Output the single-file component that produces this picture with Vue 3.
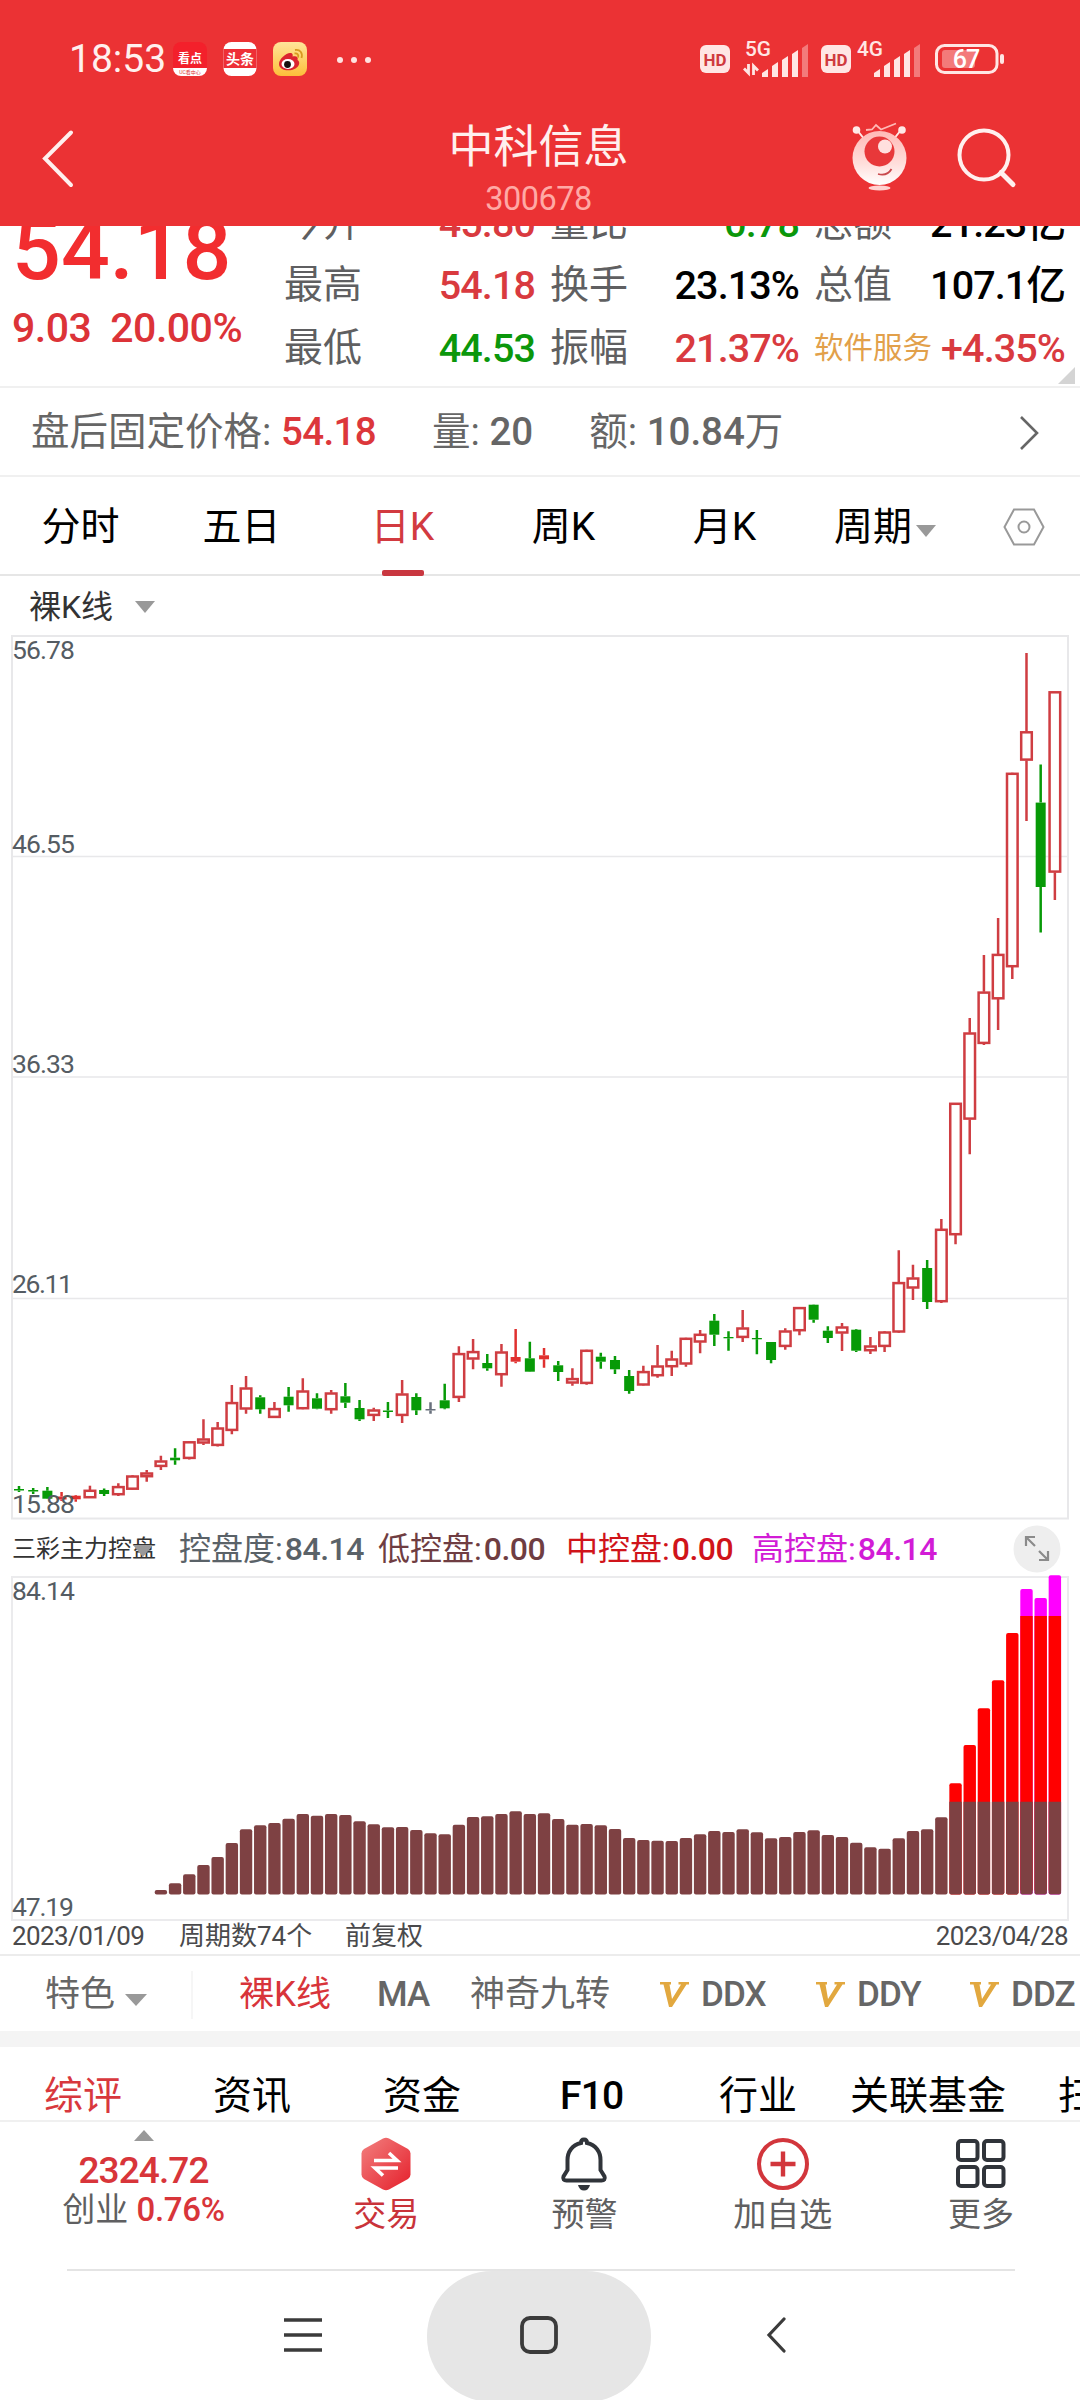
<script setup>
import { ref } from 'vue'

const periods = ['分时', '五日', '日K', '周K', '月K', '周期']
const activePeriod = ref('日K')

const quotes = [
  { label: '今开', value: '45.80', tone: 'up' },
  { label: '量比', value: '0.78', tone: 'down' },
  { label: '总额', value: '21.23亿', tone: 'flat' },
  { label: '最高', value: '54.18', tone: 'up' },
  { label: '换手', value: '23.13%', tone: 'flat' },
  { label: '总值', value: '107.1亿', tone: 'flat' },
  { label: '最低', value: '44.53', tone: 'down' },
  { label: '振幅', value: '21.37%', tone: 'up' },
  { label: '软件服务', value: '+4.35%', tone: 'up', sector: true },
]

const sections = ['综评', '资讯', '资金', 'F10', '行业', '关联基金', '扫雷']
const activeSection = ref('综评')

// r = alta (vazado), s = alta com corpo cheio, g = baixa, n = neutro
// [tipo, máxima, topo do corpo, base do corpo, mínima]
const candles = [
  ['g', 1486, 1489, 1490.5, 1492], ['g', 1488, 1490, 1491.5, 1494], ['g', 1487, 1490.7, 1498.7, 1499],
  ['s', 1492, 1496.5, 1499.5, 1501], ['s', 1495, 1495.7, 1499.3, 1501.7], ['r', 1485.7, 1490, 1498, 1498],
  ['g', 1488.5, 1490, 1494, 1496], ['r', 1483.3, 1486.3, 1495, 1496], ['r', 1475, 1475.7, 1489.5, 1490],
  ['r', 1470, 1472.7, 1477, 1481.7], ['r', 1455.7, 1460.7, 1466.7, 1470], ['g', 1448.3, 1457.7, 1460.3, 1464.7],
  ['r', 1441, 1441.5, 1458.7, 1459.5], ['r', 1419.3, 1438.7, 1443.3, 1445], ['r', 1422, 1427.7, 1445.7, 1446.5],
  ['r', 1385, 1402.3, 1430.7, 1434.3], ['r', 1376, 1387.7, 1409.3, 1413.7], ['g', 1395.3, 1397.3, 1409.3, 1413.7],
  ['r', 1402, 1408.3, 1417.7, 1418], ['g', 1387, 1396.7, 1405.3, 1411.7], ['r', 1378.3, 1390.7, 1409, 1409.3],
  ['g', 1393.3, 1398.3, 1408.7, 1409.3], ['r', 1390, 1392.7, 1410, 1413.7], ['g', 1383, 1396.3, 1402.7, 1408],
  ['g', 1400, 1408, 1419.3, 1421], ['r', 1407.7, 1409.7, 1415.7, 1421], ['g', 1402, 1410.5, 1412, 1418],
  ['r', 1380, 1393.7, 1415.7, 1423], ['g', 1393.3, 1397, 1410.3, 1415], ['n', 1402.3, 1409, 1410.5, 1413.7],
  ['g', 1383.7, 1400.3, 1408.3, 1409.3], ['r', 1346.3, 1353.3, 1397.7, 1402], ['r', 1339, 1351.3, 1359.3, 1369.3],
  ['g', 1354, 1363, 1368.3, 1370.7], ['r', 1344, 1351.7, 1375, 1386.7], ['s', 1329, 1357, 1361.7, 1363.3],
  ['g', 1341.7, 1358.3, 1371.7, 1372], ['s', 1348, 1355.3, 1359.3, 1367.7], ['g', 1361, 1365.3, 1372, 1381],
  ['r', 1368.3, 1378.3, 1383.3, 1385.7], ['r', 1349.7, 1350, 1383.7, 1384.7], ['g', 1352.7, 1356.7, 1361.7, 1368.7],
  ['g', 1356, 1360, 1369.3, 1374], ['g', 1370, 1376, 1391, 1393.7], ['r', 1365.7, 1371.3, 1385.3, 1385.7],
  ['r', 1345, 1365.7, 1376, 1377.7], ['r', 1350.7, 1358.7, 1367, 1376], ['r', 1337.7, 1338, 1364.3, 1366.7],
  ['r', 1330, 1334, 1342.3, 1353.3], ['g', 1314, 1320.7, 1334.7, 1346], ['g', 1331.3, 1337, 1338.3, 1350.7],
  ['r', 1310, 1327.7, 1337.7, 1342], ['g', 1330, 1338, 1339.3, 1354.3], ['g', 1342, 1342, 1360, 1363.3],
  ['r', 1328.3, 1330.7, 1346.7, 1349.7], ['r', 1307, 1307.3, 1331, 1335.3], ['g', 1304.5, 1304.7, 1319.7, 1322.7],
  ['g', 1326.3, 1330.7, 1338, 1343], ['r', 1323, 1326.7, 1333.3, 1351], ['g', 1329, 1329.7, 1350.7, 1352],
  ['r', 1337, 1345.7, 1351, 1354], ['r', 1331, 1331.7, 1346.7, 1352], ['r', 1250.3, 1282.3, 1332.3, 1333],
  ['r', 1264.7, 1277.7, 1288.3, 1300], ['g', 1260, 1268, 1302, 1309], ['r', 1219, 1229, 1302, 1303],
  ['r', 1102.9, 1103, 1235, 1244.3], ['r', 1018, 1032.7, 1119.4, 1154.3], ['r', 955, 991.8, 1043.7, 1045],
  ['r', 917.9, 954.1, 999.1, 1030], ['r', 772.8, 773, 967, 979], ['r', 653, 731.5, 760.4, 821],
  ['g', 764.5, 802.6, 887, 932.6], ['r', 691.5, 691.5, 872.4, 900],
].map(([type, high, top, bottom, low], i) => ({ type, high, top, bottom, low, x: 19 + i * 14.19 }))

const colors = { r: '#cf3d42', s: '#e0302f', g: '#079a07', n: '#68707c' }

const BASE = 1894.5
const LOW_TOP = 1801.7
const MID_TOP = 1616
const bars = [
  1890, 1883.3, 1874.3, 1865, 1857, 1843, 1829.3, 1825.3, 1823, 1818.7, 1814, 1815.7, 1814, 1815, 1821.3,
  1824.3, 1827.3, 1827, 1830, 1833.3, 1834.3, 1824.7, 1817, 1816.3, 1814, 1811.3, 1814, 1813.3, 1819,
  1824.7, 1824, 1825.3, 1829, 1838, 1840, 1840.7, 1841, 1838, 1834.3, 1831, 1832, 1829.3, 1832.3, 1838.3,
  1837, 1832, 1830.3, 1835, 1837, 1842.7, 1847.3, 1848.7, 1838.3, 1831, 1829.3, 1817.3, 1783.3, 1745,
  1708.3, 1680.3, 1633, 1589, 1598, 1575.3,
].map((top, i) => ({ top, x: 19 + (i + 10) * 14.19 - 6.2 }))

function barColor(top) {
  if (top < MID_TOP) return '#ff00ff'
  return top < LOW_TOP ? '#ff0000' : '#7e4143'
}
</script>

<template>
  <div class="phone">
    <header class="header">
      <div class="status">
        <span class="clock">18:53</span>
        <svg class="status-apps" width="210" height="40" viewBox="170 39 210 40">
          <defs>
            <linearGradient id="weibo" x1="0" y1="0" x2="0" y2="1">
              <stop offset="0" stop-color="#ffe59a" />
              <stop offset="1" stop-color="#fdbf3a" />
            </linearGradient>
          </defs>
          <rect x="173" y="42" width="34" height="34" rx="8" fill="#f3202b" />
          <path d="M173 68h34a8 8 0 0 1-8 8h-18a8 8 0 0 1-8-8z" fill="#fff" />
          <text x="190" y="62.5" font-size="12" text-anchor="middle" fill="#fff" font-weight="700">看点</text>
          <text x="190" y="73.5" font-size="5" text-anchor="middle" fill="#d33">UC看中心</text>
          <rect x="223.500" y="42" width="33" height="34" rx="8" fill="#fff" />
          <path d="M223.500 49h33v19h-33z" fill="#ee2f36" />
          <text x="240" y="64" font-size="14" text-anchor="middle" fill="#fff" font-weight="700">头条</text>
          <rect x="273" y="42" width="34" height="34" rx="8" fill="url(#weibo)" />
          <path d="M279 64c0-5 7-11 11-11 3 0 3 2 2.500 3.500 4-1 6 .5 5 3.500 3 2 2 6-2 8.500-6 3.500-16.500 2-16.500-4.500z" fill="#dc2430" />
          <ellipse cx="288" cy="64" rx="6.500" ry="5" fill="#fff" />
          <circle cx="287.500" cy="64.500" r="3.400" fill="#16110f" />
          <path d="M295 50c5-1 8 3 6.500 8M294.500 53.500c3-.5 4.500 1.500 3.500 4" fill="none" stroke="#d89a20" stroke-width="1.800" />
          <circle cx="340" cy="60" r="3" fill="#ffe3e0" />
          <circle cx="354" cy="60" r="3" fill="#ffe3e0" />
          <circle cx="368" cy="60" r="3" fill="#ffe3e0" />
        </svg>
        <svg class="status-signal" width="310" height="46" viewBox="696 36 310 46" fill="#ffe6e4">
          <g v-for="x in [700, 821]" :key="x">
            <rect :x="x" y="45" width="30" height="28" rx="6" />
            <text
              :x="x + 3.5"
              y="65.500"
              font-size="17"
              font-weight="700"
              fill="#cf3a3e"
              textLength="23"
              lengthAdjust="spacingAndGlyphs"
            >HD</text>
          </g>
          <text x="745" y="55.500" font-size="20" font-weight="500" textLength="26" lengthAdjust="spacingAndGlyphs">5G</text>
          <text x="857" y="55.500" font-size="20" font-weight="500" textLength="26" lengthAdjust="spacingAndGlyphs">4G</text>
          <path d="M748.500 64v9l-4.500-4.500M753.500 75v-9l4.500 4.500" fill="none" stroke="#ffe6e4" stroke-width="2.800" />
          <g v-for="x in [762, 874]" :key="x">
            <path :d="`M${x} 73l6-4v8h-6z`" />
            <path :d="`M${x + 10} 66l6-4v15h-6z`" />
            <path :d="`M${x + 20} 60l6-4v21h-6z`" />
            <path :d="`M${x + 30} 54l6-4v27h-6z`" />
            <path :d="`M${x + 40} 48l6-4v33h-6z`" opacity=".4" />
          </g>
          <rect x="936.500" y="45.500" width="60.500" height="27" rx="8" fill="none" stroke="#ffe6e4" stroke-width="3" />
          <rect x="942" y="50" width="33" height="18" rx="3" opacity=".4" />
          <rect x="1000" y="54" width="4" height="10" rx="2" />
          <text x="966" y="68" font-size="25" text-anchor="middle" font-weight="500" fill="#fff" letter-spacing="-1">67</text>
        </svg>
      </div>
      <div class="nav">
        <svg width="40" height="64" viewBox="0 0 40 64">
          <path d="M32 5.500L6 31.500l26 26.500" fill="none" stroke="#fff0ee" stroke-width="4" stroke-linecap="round" />
        </svg>
        <div class="title">
          <h1>中科信息</h1>
          <span>300678</span>
        </div>
        <div class="nav-actions">
          <svg width="62" height="76" viewBox="848 123 62 76">
            <defs>
              <linearGradient id="mascot" x1="0" y1="0" x2="0" y2="1">
                <stop offset="0" stop-color="#ffb9b6" />
                <stop offset=".6" stop-color="#ffdedb" />
                <stop offset="1" stop-color="#fff" />
              </linearGradient>
            </defs>
            <path d="M857 132l8 10M901 132l-8 10" stroke="#ffe9e7" stroke-width="2" />
            <circle cx="856.500" cy="132" r="3.800" fill="#ffe9e7" />
            <circle cx="902" cy="132" r="3.800" fill="#ffe9e7" />
            <path d="M866 132l6-.5 4-4.500 5 4.500 15-6" fill="none" stroke="#ffb9b6" stroke-width="1.800" />
            <circle cx="879.500" cy="160" r="27" fill="url(#mascot)" />
            <circle cx="879.500" cy="153.500" r="15" fill="#e8383a" />
            <circle cx="885" cy="148.500" r="7" fill="#ffe0de" />
            <path d="M878 176c6 1.500 11-.5 13.500-5" fill="none" stroke="#c9484c" stroke-width="1.800" />
            <ellipse cx="879.500" cy="190" rx="11" ry="2.600" fill="#ffd2d0" />
          </svg>
          <svg width="62" height="76" viewBox="955 122 62 76" fill="none" stroke="#fff0ee" stroke-linecap="round">
            <circle cx="984" cy="156" r="24.500" stroke-width="4" />
            <path d="M1001 173.500l12 12" stroke-width="5" />
          </svg>
        </div>
      </div>
    </header>

    <section class="quote">
      <div class="price">
        <strong>54.18</strong>
        <p><span>9.03</span><span>20.00%</span></p>
      </div>
      <div class="quote-grid">
        <div v-for="q in quotes" :key="q.label" class="cell">
          <span class="label" :class="{ sector: q.sector }">{{ q.label }}</span>
          <span class="value" :class="q.tone">{{ q.value }}</span>
        </div>
      </div>
      <i class="corner"></i>
    </section>

    <section class="after-hours">
      <span>盘后固定价格: <b>54.18</b></span>
      <span>量: <em>20</em></span>
      <span>额: <em>10.84</em>万</span>
      <svg width="24" height="40" viewBox="0 0 24 40">
        <path d="M3 4l16 16L3 36" fill="none" stroke="#666" stroke-width="2.600" />
      </svg>
    </section>

    <nav class="periods">
      <button
        v-for="p in periods"
        :key="p"
        type="button"
        :class="{ active: p === activePeriod }"
        @click="activePeriod = p"
      >
        {{ p }}<i v-if="p === '周期'" class="caret"></i>
      </button>
      <svg width="42" height="38" viewBox="0 0 42 38" fill="none" stroke="#999" stroke-width="2">
        <path d="M11 1.500h20L40.500 19 31 36.500H11L1.500 19z" />
        <circle cx="21" cy="19" r="5.500" />
      </svg>
    </nav>

    <div class="overlay-select">裸K线<i class="caret"></i></div>

    <svg class="chart" width="1080" height="895" viewBox="0 630 1080 895">
      <g fill="none" stroke="#e8e8ea" stroke-width="2">
        <rect x="12" y="636" width="1056" height="882.500" />
        <path d="M12 856.500h1056M12 1077h1056M12 1298.500h1056" stroke-width="1.500" />
      </g>
      <g v-for="c in candles" :key="c.x" :stroke="colors[c.type]" stroke-width="2.500">
        <path :d="`M${c.x} ${c.high}V${c.top}M${c.x} ${c.bottom}V${c.low}`" />
        <rect
          v-if="c.type === 'r'"
          :x="c.x - 5.3"
          :y="c.top + 0.8"
          width="10.600"
          :height="Math.max(c.bottom - c.top - 1.6, 1)"
          fill="#fff"
          fill-opacity=".7"
        />
        <rect
          v-else
          :x="c.x - 5"
          :y="c.top"
          width="10"
          :height="c.bottom - c.top"
          :fill="colors[c.type]"
          stroke="none"
        />
      </g>
      <g class="axis">
        <text x="12" y="659" textLength="63">56.78</text>
        <text x="12" y="853" textLength="63">46.55</text>
        <text x="12" y="1073" textLength="63">36.33</text>
        <text x="12" y="1293" textLength="61">26.11</text>
        <text x="12" y="1513" textLength="63">15.88</text>
      </g>
    </svg>

    <div class="indicator">
      <span class="name">三彩主力控盘<i class="caret"></i></span>
      <span class="degree">控盘度:<em>84.14</em></span>
      <span class="low">低控盘:<em>0.00</em></span>
      <span class="mid">中控盘:<em>0.00</em></span>
      <span class="high">高控盘:<em>84.14</em></span>
      <svg class="expand" width="48" height="48" viewBox="0 0 48 48">
        <circle cx="24" cy="24" r="23.500" fill="#eee" />
        <path d="M13 21v-9h9M13 12l9 9M35 26v9h-9M35 35l-9-9" fill="none" stroke="#8b8b8b" stroke-width="2.200" />
      </svg>
    </div>

    <svg class="chart" width="1080" height="351" viewBox="0 1571 1080 351">
      <rect x="12" y="1577" width="1056" height="343" fill="none" stroke="#ebebed" stroke-width="2" />
      <g v-for="b in bars" :key="b.x">
        <rect :x="b.x" :y="b.top" width="12.400" :height="BASE - b.top" rx="2" :fill="barColor(b.top)" />
        <rect v-if="b.top < MID_TOP" :x="b.x" :y="MID_TOP" width="12.400" :height="BASE - MID_TOP - 4" fill="#ff0000" />
        <path
          v-if="b.top < LOW_TOP"
          :d="`M${b.x} ${LOW_TOP}h12.400V${BASE - 2}q0 2-2 2h-8.400q-2 0-2-2z`"
          fill="#7e4143"
        />
      </g>
      <g class="axis">
        <text x="12" y="1600" textLength="63">84.14</text>
        <text x="12" y="1916" textLength="62">47.19</text>
      </g>
    </svg>

    <div class="dates">
      <span class="date">2023/01/09</span>
      <span>周期数74个</span>
      <span>前复权</span>
      <span class="date">2023/04/28</span>
    </div>

    <div class="tools">
      <span class="featured">特色<i class="caret"></i></span>
      <span class="active">裸K线</span>
      <span class="latin">MA</span>
      <span>神奇九转</span>
      <span v-for="d in ['DDX', 'DDY', 'DDZ']" :key="d" class="vip">
        <svg width="29" height="27" viewBox="0 0 29 27">
          <path d="M0 1h11v2.500H9.500L12 18l9-14.500h-2.500V1H29v2.500h-2.500L12 26H9L3.500 3.500H0z" fill="#e2a83f" />
        </svg>
        <em>{{ d }}</em>
      </span>
    </div>

    <nav class="sections">
      <button
        v-for="s in sections"
        :key="s"
        type="button"
        :class="{ active: s === activeSection, latin: s === 'F10' }"
        @click="activeSection = s"
      >
        {{ s }}
      </button>
    </nav>

    <footer class="actions">
      <div class="index">
        <i class="caret up"></i>
        <b>2324.72</b>
        <p>创业 <em>0.76%</em></p>
      </div>
      <div class="action trade">
        <svg width="56" height="56" viewBox="0 0 56 56">
          <defs>
            <linearGradient id="trade" x1="0" y1="0" x2="1" y2="1">
              <stop offset="0" stop-color="#f2807f" />
              <stop offset="1" stop-color="#e51f2b" />
            </linearGradient>
          </defs>
          <path d="M25 2.500q3-1.500 6 0l19 10.500q2.500 1.500 2.500 4.500v21q0 3-2.500 4.500L31 53.500q-3 1.500-6 0L6 43q-2.500-1.500-2.500-4.500v-21q0-3 2.500-4.500z" fill="url(#trade)" />
          <path d="M16 24.500h23l-8-7.500M40 32H17l8 7.500" fill="none" stroke="#fff" stroke-width="3.600" />
        </svg>
        <span>交易</span>
      </div>
      <div class="action">
        <svg width="56" height="56" viewBox="0 0 56 56">
          <path d="M28 3.500c2 0 3 1.500 3 3.500 9 2 13.500 9 13.500 17v10l4 6.500c1 2.500-.5 4-3 4h-35c-2.500 0-4-1.500-3-4l4-6.500V24c0-8 4.500-15 13.500-17 0-2 1-3.500 3-3.500z" fill="none" stroke="#30343a" stroke-width="4" />
          <path d="M22 49h12q-1.500 5.500-6 5.500T22 49z" fill="#30343a" />
        </svg>
        <span>预警</span>
      </div>
      <div class="action">
        <svg width="56" height="56" viewBox="0 0 56 56" fill="none" stroke="#d2363c">
          <circle cx="28" cy="28" r="24" stroke-width="4" />
          <path d="M28 15.500v25M15.500 28h25" stroke-width="4.400" />
        </svg>
        <span>加自选</span>
      </div>
      <div class="action">
        <svg width="56" height="56" viewBox="0 0 56 56" fill="none" stroke="#30343a" stroke-width="4">
          <rect x="5" y="5" width="19.500" height="19" rx="3" />
          <rect x="31" y="5" width="19.500" height="19" rx="3" />
          <rect x="5" y="31" width="19.500" height="19" rx="3" />
          <rect x="31" y="31" width="19.500" height="19" rx="3" />
        </svg>
        <span>更多</span>
      </div>
    </footer>

    <div class="system-nav">
      <svg width="38" height="36" viewBox="0 0 38 36">
        <path d="M0 3h38M0 18h38M0 33h38" stroke="#3b3b3b" stroke-width="3.600" />
      </svg>
      <div class="home">
        <svg width="38" height="38" viewBox="0 0 38 38">
          <rect x="2" y="2" width="34" height="34" rx="8" fill="none" stroke="#3b3b3b" stroke-width="3.800" />
        </svg>
      </div>
      <svg width="20" height="36" viewBox="0 0 20 36">
        <path d="M18 2L3 18l15 16" fill="none" stroke="#3b3b3b" stroke-width="3.200" stroke-linecap="round" />
      </svg>
    </div>
  </div>
</template>

<style>
body {
  background: #fff;
}
</style>

<style scoped>
.phone {
  width: 1080px;
  height: 2400px;
  overflow: hidden;
  background: #fff;
  color: #5f5f61;
  font-family: Roboto, 'Noto Sans CJK SC', sans-serif;
  font-size: 39px;
  line-height: 1;
  white-space: nowrap;
}

.phone * {
  box-sizing: border-box;
}

svg {
  display: block;
  flex-shrink: 0;
}

button {
  border: none;
  background: none;
  padding: 0;
  font: inherit;
  color: #000;
  white-space: nowrap;
}

b,
em,
strong,
h1 {
  font-weight: inherit;
  font-style: normal;
}

p,
h1 {
  margin: 0;
}

.caret {
  display: inline-block;
  border: 10px solid transparent;
  border-top: 12px solid #999;
  border-bottom: none;
}

.caret.up {
  border-top: none;
  border-bottom: 11px solid #999;
}

.header {
  height: 226px;
  background: #eb3234;
  color: #fff0ee;
}

.status {
  height: 118px;
  padding-left: 69px;
  display: flex;
  align-items: center;
}

.clock {
  width: 101px;
  font-size: 39px;
  line-height: 50px;
}

.status-signal {
  margin-left: 316px;
}

.nav {
  height: 82px;
  padding: 0 63px 0 39px;
  display: flex;
  justify-content: space-between;
  align-items: center;
}

.title {
  display: flex;
  flex-direction: column;
  align-items: center;
  padding: 26px 0 0 150px;
}

.title h1 {
  font-size: 45px;
  line-height: 54px;
}

.title span {
  font-size: 32.5px;
  line-height: 48px;
  letter-spacing: -0.5px;
  color: #ffa9a5;
}

.nav-actions {
  display: flex;
  gap: 45px;
}

.quote {
  position: relative;
  height: 162px;
  display: flex;
  overflow: hidden;
  border-bottom: 2px solid #f0f0f0;
}

.price {
  width: 284px;
  padding-left: 12px;
  color: #dc3338;
}

.price strong {
  display: block;
  height: 80px;
  margin-top: -19px;
  font-size: 86px;
  line-height: 86px;
  font-weight: 500;
  color: #f22d2f;
}

.price p {
  display: flex;
  gap: 19px;
  padding-top: 19px;
  font-size: 41px;
  font-weight: 500;
  line-height: 44px;
  letter-spacing: -0.5px;
}

.quote-grid {
  display: grid;
  grid-template-columns: 251px 249px 251px;
  grid-auto-rows: 62.5px;
  column-gap: 15px;
  margin-top: -34px;
}

.cell {
  display: flex;
  justify-content: space-between;
  align-items: center;
}

.label.sector {
  font-size: 29.5px;
  color: #e2a04a;
}

.value {
  font-size: 39.5px;
  font-weight: 500;
  letter-spacing: -0.9px;
}

.up {
  color: #d93a3f;
}

.down {
  color: #0b970b;
}

.flat {
  color: #000;
}

.corner {
  position: absolute;
  right: 5px;
  bottom: 2px;
  border-left: 17px solid transparent;
  border-bottom: 17px solid #d4d4d4;
}

.after-hours {
  height: 89px;
  padding: 2px 38px 0 31px;
  display: flex;
  align-items: center;
  border-bottom: 2px solid #f0f0f0;
  font-size: 38.5px;
  color: #666;
}

.after-hours span {
  margin-right: 56px;
}

.after-hours em {
  font-weight: 500;
}

.after-hours b {
  font-weight: 500;
  letter-spacing: -0.6px;
  color: #dc373b;
}

.after-hours svg {
  margin-left: auto;
}

.periods {
  height: 99px;
  display: grid;
  grid-template-columns: repeat(5, 161px) 160px 118px;
  align-items: center;
  justify-items: center;
  border-bottom: 2px solid #e6e6e6;
}

.periods button {
  position: relative;
  height: 97px;
  padding-top: 3px;
  font-size: 39px;
}

.periods svg {
  margin-top: 3px;
}

.periods .active {
  color: #d23a40;
}

.periods .active::after {
  content: '';
  position: absolute;
  left: 50%;
  bottom: -2px;
  width: 42px;
  height: 6px;
  margin-left: -20px;
  border-radius: 2px;
  background: #c93740;
}

.periods .caret {
  margin: 0 0 3px 4px;
}

.overlay-select {
  height: 54px;
  padding: 8px 0 0 29px;
  display: flex;
  align-items: center;
  gap: 22px;
  font-size: 32px;
  color: #333;
}

.chart {
  font-family: Roboto, sans-serif;
}

.axis {
  font-size: 26.5px;
  fill: #555c63;
}

.indicator {
  height: 46px;
  padding: 0 19px 0 12px;
  display: grid;
  grid-template-columns: 167px 199px 188px 186px 1fr 48px;
  align-items: center;
  font-size: 32px;
}

.indicator em {
  font-size: 32px;
  font-weight: 500;
  letter-spacing: -0.5px;
  margin-left: 2px;
}

.indicator .name {
  position: relative;
  font-size: 24px;
  color: #333;
}

.name .caret {
  position: absolute;
  left: 121px;
  top: 8px;
}

.degree {
  color: #5a6268;
}

.low {
  color: #6f3d42;
}

.mid {
  color: #d0141a;
}

.high {
  color: #d21cd6;
}

.dates {
  height: 34px;
  padding: 0 12px 4px;
  display: grid;
  grid-template-columns: 167px 166px 1fr auto;
  align-items: center;
  border-bottom: 2px solid #ececec;
  font-size: 26px;
  color: #4a4a4c;
}

.date {
  letter-spacing: -0.6px;
}

.tools {
  height: 75px;
  padding: 2px 0 0 45px;
  display: grid;
  grid-template-columns: 194px 138px 93px 190px 156px 154px 160px;
  align-items: center;
  font-size: 35px;
  color: #666;
}

.tools .active {
  color: #d8343a;
}

.tools .latin,
.tools em {
  font-weight: 500;
  letter-spacing: -0.9px;
}

.featured {
  height: 48px;
  margin-right: 46px;
  line-height: 48px;
  border-right: 2px solid #f6f6f6;
}

.featured .caret {
  margin-left: 10px;
  border-width: 12px 11px 0;
}

.vip {
  display: flex;
  align-items: center;
  gap: 12px;
}

.sections {
  height: 91px;
  border-top: 16px solid #f4f4f4;
  border-bottom: 2px solid #f0f0f0;
  padding: 26px 0 0 44px;
  display: grid;
  grid-template-columns: 169px 170px 177px 159px 131px 208px auto;
  justify-items: start;
  align-items: center;
}

.sections button {
  font-size: 39px;
  line-height: 47px;
}

.sections .latin {
  font-weight: 500;
  letter-spacing: -0.8px;
}

.sections .active {
  color: #d8383d;
}

.actions {
  height: 147px;
  display: grid;
  grid-template-columns: 287px repeat(4, 198.3px);
  text-align: center;
}

.index {
  display: flex;
  flex-direction: column;
  align-items: center;
  padding-top: 8px;
  color: #d8353a;
  font-weight: 500;
}

.index b {
  margin-top: 11px;
  font-size: 37px;
  line-height: 37px;
  letter-spacing: -0.9px;
}

.index p {
  margin-top: 2px;
  font-size: 33px;
  line-height: 37px;
  font-weight: 400;
  color: #5f5f61;
}

.index em {
  font-weight: 500;
  letter-spacing: -0.3px;
  color: #d8353a;
}

.action {
  display: flex;
  flex-direction: column;
  align-items: center;
  gap: 6px;
  padding-top: 14px;
  font-size: 33px;
  line-height: 34px;
}

.action.trade {
  color: #c9333a;
}

.system-nav {
  height: 131px;
  margin: 0 65px 0 67px;
  border-top: 2px solid #e4e4e4;
  display: grid;
  grid-template-columns: 360px 224px 1fr;
  align-items: center;
}

.system-nav svg {
  margin-top: -4px;
}

.system-nav > svg:first-child {
  margin-left: 217px;
}

.system-nav > svg:last-child {
  margin-left: 115px;
}

.home {
  height: 131px;
  display: flex;
  align-items: center;
  justify-content: center;
  border-radius: 65px;
  background: #e6e6e6;
}
</style>
